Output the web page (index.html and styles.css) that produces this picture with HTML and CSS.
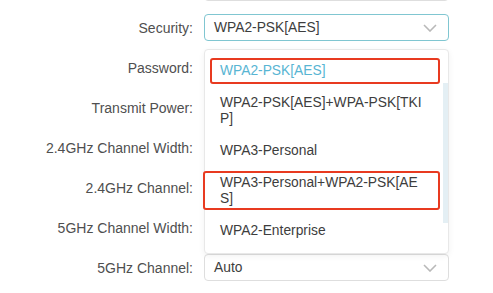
FILE: index.html
```html
<!DOCTYPE html>
<html lang="en">
<head>
    <meta charset="UTF-8">
    <meta name="viewport" content="width=device-width, initial-scale=1.0">
    <title>Wireless Settings</title>
    <link rel="stylesheet" href="styles.css">
</head>
<body>
    <main class="settings-form">
        <!-- previous field, scrolled mostly out of view -->
        <div class="form-row">
            <label class="form-label"></label>
            <div class="field"></div>
        </div>

        <div class="form-row">
            <label class="form-label">Security:</label>
            <div class="select-wrap">
                <div class="select select-open">
                    <span>WPA2-PSK[AES]</span>
                    <svg class="chevron" width="14" height="8" viewBox="0 0 14 8">
                        <polyline points="1,1 7,7 13,1" fill="none" stroke="#b9b9b9" stroke-width="1.6"/>
                    </svg>
                </div>

                <!-- Security options dropdown -->
                <ul class="dropdown">
                    <li class="option option-selected mark mark-first">WPA2-PSK[AES]</li>
                    <li class="option">WPA2-PSK[AES]+WPA-PSK[TKIP]</li>
                    <li class="option">WPA3-Personal</li>
                    <li class="option mark mark-second">WPA3-Personal+WPA2-PSK[AES]</li>
                    <li class="option">WPA2-Enterprise</li>
                </ul>
                <div class="scrollbar"></div>
            </div>
        </div>

        <div class="form-row">
            <label class="form-label">Password:</label>
            <div class="field"></div>
        </div>
        <div class="form-row">
            <label class="form-label">Transmit Power:</label>
            <div class="field"></div>
        </div>
        <div class="form-row">
            <label class="form-label">2.4GHz Channel Width:</label>
            <div class="field"></div>
        </div>
        <div class="form-row">
            <label class="form-label">2.4GHz Channel:</label>
            <div class="field"></div>
        </div>
        <div class="form-row">
            <label class="form-label">5GHz Channel Width:</label>
            <div class="field"></div>
        </div>
        <div class="form-row">
            <label class="form-label">5GHz Channel:</label>
            <div class="select">
                <span>Auto</span>
                <svg class="chevron" width="14" height="8" viewBox="0 0 14 8">
                    <polyline points="1,1 7,7 13,1" fill="none" stroke="#b9b9b9" stroke-width="1.6"/>
                </svg>
            </div>
        </div>
    </main>
</body>
</html>
```

FILE: styles.css
```css
* {
    margin: 0;
    padding: 0;
    box-sizing: border-box;
    font-family: 'Liberation Sans', Arial, sans-serif;
}

:root {
    --label-text: #4f4f4f;
    --option-text: #3d3d3d;
    --teal: #58b5d3;
    --teal-border: #80c6d1;
    --gray-border: #dedede;
    --mark-red: #e83a20;
    --white: #ffffff;
}

body {
    background-color: var(--white);
    overflow: hidden;
}

/* Form Layout */
.settings-form {
    display: flex;
    flex-direction: column;
    gap: 13px;
    margin-top: -26px;
}

.form-row {
    display: grid;
    grid-template-columns: 193px 245px;
    column-gap: 11px;
    align-items: center;
    height: 27px;
}

.form-label {
    font-size: 14px;
    color: var(--label-text);
    text-align: right;
}

.field {
    height: 27px;
    border: 1px solid var(--gray-border);
    border-radius: 4px;
}

/* Select Boxes */
.select-wrap {
    position: relative;
}

.select {
    height: 27px;
    border: 1px solid var(--gray-border);
    border-radius: 4px;
    padding: 0 11px 0 9px;
    display: flex;
    align-items: center;
    justify-content: space-between;
    font-size: 13.8px;
    color: var(--option-text);
}

.select-open {
    border-color: var(--teal-border);
}

.chevron {
    display: block;
}

/* Dropdown */
.dropdown {
    position: absolute;
    top: 35px;
    left: 0;
    width: 245px;
    list-style: none;
    background: var(--white);
    border: 1px solid #e8e8e8;
    border-radius: 4px;
    box-shadow: 0 2px 6px rgba(0,0,0,0.06);
    padding: 5px 0 6px;
    z-index: 10;
}

.option {
    position: relative;
    margin-right: 6px;
    padding: 8px 14px 8px 15px;
    font-size: 13.8px;
    line-height: 16px;
    color: var(--option-text);
    word-break: break-all;
}

.option-selected {
    color: var(--teal);
}

.scrollbar {
    position: absolute;
    top: 69px;
    right: 1px;
    width: 5px;
    height: 140px;
    background-color: #e4eff4;
    z-index: 11;
}

/* Highlight marks */
.mark::after {
    content: '';
    position: absolute;
    border: 2px solid var(--mark-red);
    border-radius: 3px;
}

.mark-first::after {
    top: 3px;
    bottom: 3px;
    left: 5px;
    right: 2px;
}

.mark-second::after {
    top: 4px;
    bottom: 5px;
    left: -2px;
    right: 2px;
}
```
